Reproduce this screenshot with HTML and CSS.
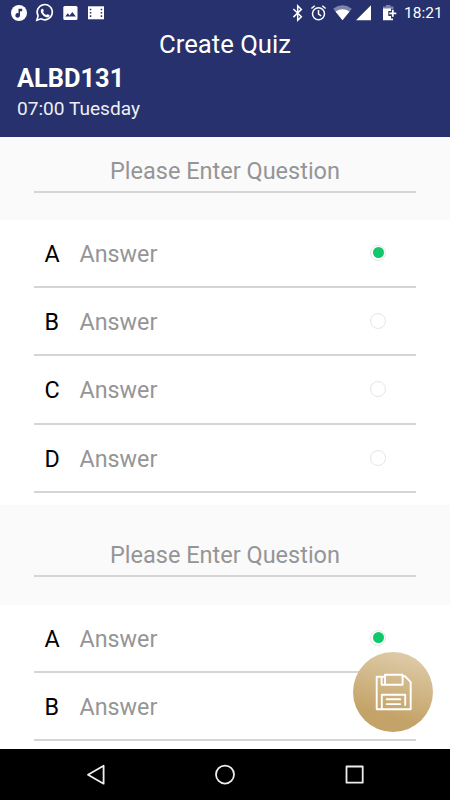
FILE: index.html
```html
<!DOCTYPE html>
<html lang="en">
<head>
<meta charset="utf-8">
<title>Create Quiz</title>
<link rel="stylesheet" href="styles.css">
</head>
<body>
<div class="screen">
  <header class="header">
    <div class="status">
      <svg class="status-left" width="110" height="26" viewBox="0 0 110 26" fill="#fff">
        <circle cx="19" cy="13" r="8"/>
        <path d="M18.5 8.8h3.7v2.4h-2.2v4.1a2.3 2.3 0 1 1-1.5-2.1z" fill="#26316d"/>
        <path d="M36.8 20.2l1.300-4.300a7.600 7.600 0 1 1 2.900 2.900z" fill="none" stroke="#fff" stroke-width="1.600"/>
        <path d="M41.300 9.200c.6-.8 1.500-.7 1.800-.1l.7 1.600c.1.5-.4 1-.8 1.400.8 1.500 2 2.500 3.400 3 .5-.5.8-1.100 1.300-.9l1.700.8c.6.4-.2 2-1.200 2.300-1.500.5-3.600-.5-5.200-2.100-1.800-1.800-3-4.300-1.700-6z"/>
        <rect x="63.300" y="6" width="14.200" height="14" rx="1.500"/>
        <path d="M65.200 16.600l2.600-3.300 1.800 2.100 2.700-3.300 3.500 4.500z" fill="#26316d"/>
        <rect x="88" y="6.300" width="16" height="13"/>
        <path d="M89.800 8.700h1.500v1.600h-1.500zm0 3.300h1.500v1.600h-1.500zm0 3.300h1.500v1.600h-1.500zm10.900-6.600h1.500v1.600h-1.500zm0 3.300h1.500v1.600h-1.500zm0 3.300h1.500v1.600h-1.500z" fill="#26316d"/>
      </svg>
      <svg class="status-right" width="122" height="26" viewBox="280 0 122 26" fill="#fff">
        <path d="M293.400 9l8 7.700-3.700 3.600V5.800l3.700 3.600-8 7.700" fill="none" stroke="#fff" stroke-width="1.500"/>
        <g fill="none" stroke="#fff" stroke-width="1.500">
          <circle cx="318.500" cy="13.800" r="6"/>
          <path d="M318.500 10v4.200l2.700 1.700M311.400 8.500l3.300-2.800m7.600 0l3.300 2.800"/>
        </g>
        <path d="M333.200 8.700q9.300-6.900 18.600 0L342.500 20.300z" fill="#7d84aa"/>
        <path d="M335.500 11.600q7-4.500 14 0l-7 8.700z"/>
        <path d="M371 5.300v15h-15z"/>
        <path d="M383 9V6.500h3V5h4.500v1.500h3V9z" fill="#7d84aa"/>
        <path d="M383 8.500h8v2.500h-2.700v5h2.700v2.500h2v1.800h-10z"/>
        <path d="M392.800 9.800v7M389.300 13.300h7" stroke="#fff" stroke-width="1.800"/>
      </svg>
      <span class="clock">18:21</span>
    </div>
    <h1 class="title">Create Quiz</h1>
    <div class="course">ALBD131</div>
    <div class="time">07:00 Tuesday</div>
  </header>

  <main class="content">
    <section class="question"><div class="question-field">Please Enter Question</div></section>
    <section class="answers">
      <div class="answer"><span class="letter">A</span><span class="hint">Answer</span><i class="radio selected"></i></div>
      <div class="answer"><span class="letter">B</span><span class="hint">Answer</span><i class="radio"></i></div>
      <div class="answer"><span class="letter">C</span><span class="hint">Answer</span><i class="radio"></i></div>
      <div class="answer"><span class="letter">D</span><span class="hint">Answer</span><i class="radio"></i></div>
    </section>
    <section class="question question-next"><div class="question-field">Please Enter Question</div></section>
    <section class="answers">
      <div class="answer"><span class="letter">A</span><span class="hint">Answer</span><i class="radio selected"></i></div>
      <div class="answer"><span class="letter">B</span><span class="hint">Answer</span><i class="radio"></i></div>
    </section>
  </main>

  <div class="save">
    <svg width="80" height="80" viewBox="0 0 80 80" fill="none" stroke="#fff" stroke-width="1.900" stroke-linejoin="round" stroke-linecap="round">
      <path d="M31.500 24.700H23.700V57.200H57.700V30.200L52 24.200H49.500"/>
      <path d="M32 22.800h17.600v10H32zM28.600 24.700v8.100H32"/>
      <path d="M28.800 57V42.800h23.400v10.200M33.700 47.300h13.500M33.700 52.100h13.500"/>
    </svg>
  </div>

  <nav class="navbar">
    <svg width="450" height="51" viewBox="0 0 450 51" fill="none" stroke="#eee" stroke-width="1.800" stroke-linejoin="round">
      <path d="M103.600 16.700v18L88 25.700z"/>
      <circle cx="225" cy="25.600" r="9"/>
      <rect x="346.500" y="17.500" width="16.200" height="16.200"/>
    </svg>
  </nav>
</div>
</body>
</html>
```
FILE: styles.css
```css
* {
  box-sizing: border-box;
}

body {
  margin: 0;
  font-family: Roboto, "Liberation Sans", sans-serif;
}

.screen {
  position: relative;
  display: flex;
  flex-direction: column;
  width: 450px;
  height: 800px;
  overflow: hidden;
  background: #fff;
}

svg {
  display: block;
}

.header {
  flex: none;
  height: 137px;
  background: #26316d;
  color: #fff;
}

.status {
  display: flex;
  height: 26px;
}

.status-right {
  margin-left: 170px;
}

.clock {
  margin-left: 2px;
  font-size: 15.5px;
  line-height: 27px;
  white-space: nowrap;
}

.title {
  margin: 0;
  font-size: 25.7px;
  font-weight: 400;
  line-height: 36px;
  text-align: center;
}

.course {
  padding-left: 17px;
  font-size: 25.4px;
  font-weight: 700;
  line-height: 33px;
}

.time {
  padding-left: 17px;
  font-size: 19.1px;
  line-height: 28px;
  color: #eeeff4;
}

.content {
  flex: 1;
  min-height: 0;
  overflow: hidden;
}

.question {
  height: 83px;
  padding: 15px 34px 0;
  background: #fafafa;
}

.question-next {
  height: 100px;
  padding-top: 31px;
}

.question-field {
  height: 41px;
  border-bottom: 2px solid #d5d5d5;
  font-size: 23.5px;
  line-height: 38px;
  text-align: center;
  color: #959595;
}

.answers {
  height: 285px;
  padding: 0 34px;
}

.answer {
  display: flex;
  align-items: center;
  height: 68.400px;
  padding: 0 30px 0 10.500px;
  border-bottom: 2px solid #d5d5d5;
  font-size: 23.3px;
}

.answer:first-child {
  height: 67.800px;
}

.letter {
  width: 35px;
  padding-top: 2px;
  color: #000;
}

.hint {
  flex: 1;
  padding-top: 2px;
  color: #959595;
}

.radio {
  display: flex;
  align-items: center;
  justify-content: center;
  width: 16px;
  height: 16px;
  border: 1px solid #e6e6e6;
  border-radius: 50%;
}

.selected::after {
  content: "";
  width: 11px;
  height: 11px;
  border-radius: 50%;
  background: #10c869;
}

.save {
  position: absolute;
  left: 353px;
  top: 652px;
  width: 80px;
  height: 80px;
  border-radius: 50%;
  background: linear-gradient(195deg, #dfcdab 5%, #c4a368 75%);
}

.navbar {
  flex: none;
  height: 51px;
  background: #000;
}
```
